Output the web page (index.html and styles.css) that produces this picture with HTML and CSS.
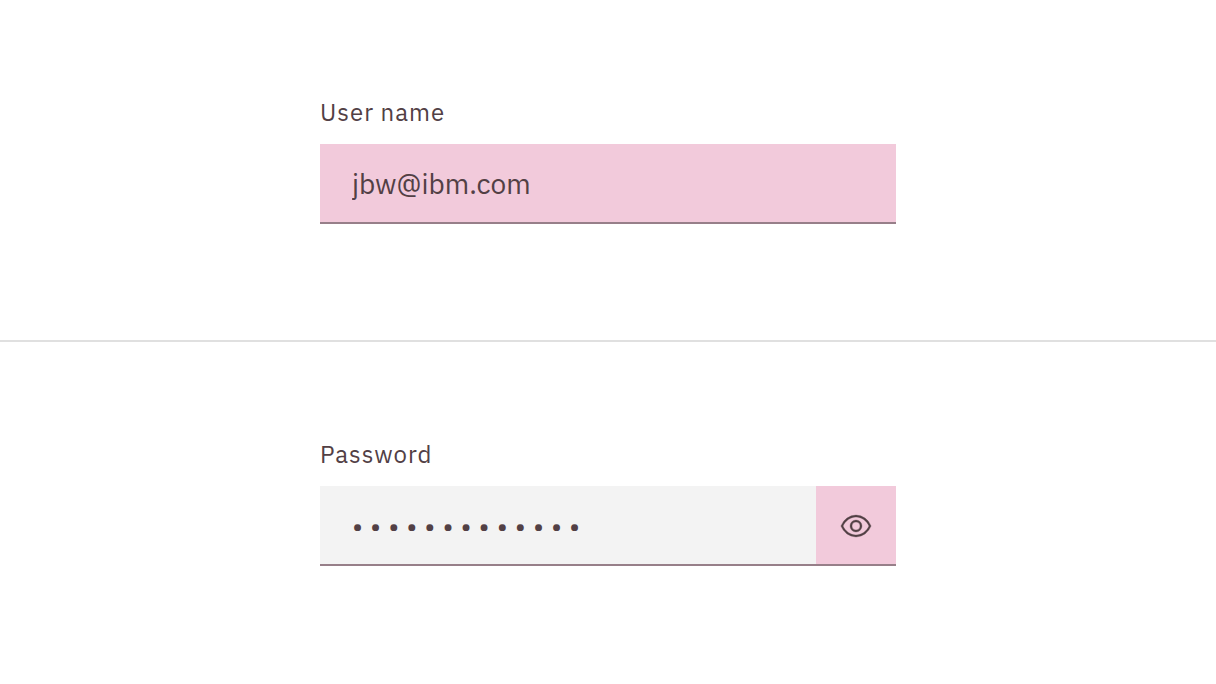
FILE: index.html
```html
<!DOCTYPE html>
<html lang="en">
<head>
<meta charset="utf-8">
<title>Text inputs</title>
<link rel="stylesheet" href="styles.css">
</head>
<body>
<main class="page">
  <section class="panel">
    <div class="field">
      <label class="label" for="username">User name</label>
      <div class="control control-active">
        <input class="input" id="username" type="text" value="jbw@ibm.com">
      </div>
    </div>
  </section>
  <section class="panel">
    <div class="field">
      <label class="label" for="password">Password</label>
      <div class="control">
        <input class="input input-password" id="password" type="password" value="correcthorse1">
        <button class="toggle" type="button" aria-label="Show password">
          <svg class="icon" viewBox="0 0 32 32" aria-hidden="true">
            <path d="M30.94 15.66A16.69 16.69 0 0 0 16 5 16.69 16.69 0 0 0 1.06 15.66a1 1 0 0 0 0 .68A16.69 16.69 0 0 0 16 27 16.69 16.69 0 0 0 30.94 16.34a1 1 0 0 0 0-.68ZM16 25c-5.3 0-10.9-3.93-12.93-9C5.1 10.93 10.7 7 16 7s10.9 3.93 12.93 9C26.9 21.07 21.3 25 16 25Z"/>
            <path d="M16 10a6 6 0 1 0 6 6 6 6 0 0 0-6-6Zm0 10a4 4 0 1 1 4-4 4 4 0 0 1-4 4Z"/>
          </svg>
        </button>
      </div>
    </div>
  </section>
</main>
</body>
</html>
```
FILE: styles.css
```css
* {
  box-sizing: border-box;
}

body {
  margin: 0;
  background: #fff;
  color: #524045;
  font-family: "IBM Plex Sans", Roboto, "Liberation Sans", sans-serif;
}

.page {
  display: grid;
  grid-template-rows: 1fr 1fr;
  min-height: 100vh;
}

.panel {
  display: flex;
  justify-content: center;
  padding: 96px 24px;
}

.panel:first-child {
  border-bottom: 2px solid #e0e0e0;
}

.field {
  flex: 0 1 576px;
}

.label {
  display: block;
  margin-bottom: 16px;
  font-size: 24px;
  line-height: 32px;
  letter-spacing: 1px;
}

.control {
  display: flex;
  height: 80px;
  border-bottom: 2px solid #977f89;
  background: #f3f3f3;
}

.control-active {
  background: #f2cadb;
}

.input {
  flex: 1;
  min-width: 0;
  padding: 0 32px;
  border: 0;
  outline: 0;
  background: transparent;
  color: inherit;
  font-family: inherit;
  font-size: 28px;
}

.input-password {
  letter-spacing: 7px;
}

.toggle {
  display: flex;
  align-items: center;
  justify-content: center;
  width: 80px;
  padding: 2px 0 0;
  border: 0;
  background: #f2cadb;
  color: inherit;
}

.icon {
  width: 32px;
  height: 32px;
  fill: currentColor;
  stroke: currentColor;
  stroke-width: 0.3;
}
```
